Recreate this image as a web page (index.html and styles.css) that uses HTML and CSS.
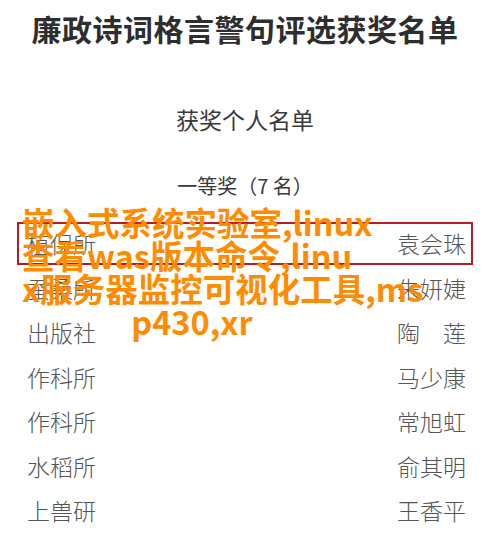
FILE: index.html
```html
<!DOCTYPE html>
<html lang="zh-CN">
<head>
    <meta charset="UTF-8">
    <meta name="viewport" content="width=device-width, initial-scale=1.0">
    <title>廉政诗词格言警句评选获奖名单</title>
    <link rel="stylesheet" href="styles.css">
</head>
<body>
    <div class="page">
        <h1 class="doc-title">廉政诗词格言警句评选获奖名单</h1>
        <h2 class="doc-subtitle">获奖个人名单</h2>
        <h3 class="prize-level">一等奖（7&nbsp;名）</h3>

        <ul class="winner-list">
            <li class="winner-row highlighted"><span>植保所</span><span>袁会珠</span></li>
            <li class="winner-row"><span>蚕桑所</span><span>朱妍婕</span></li>
            <li class="winner-row"><span>出版社</span><span>陶　莲</span></li>
            <li class="winner-row"><span>作科所</span><span>马少康</span></li>
            <li class="winner-row"><span>作科所</span><span>常旭虹</span></li>
            <li class="winner-row"><span>水稻所</span><span>俞其明</span></li>
            <li class="winner-row"><span>上兽研</span><span>王香平</span></li>
        </ul>

        <div class="overlay-title">
            <span>嵌入式系统实验室,linux</span>
            <span>查看was版本命令,linu</span>
            <span>x服务器监控可视化工具,ms</span>
            <span class="last-line">p430,xr</span>
        </div>
    </div>
</body>
</html>
```

FILE: styles.css
```css
:root {
    --ink: #3a3a3a;
    --ink-light: #555;
    --mark-red: #b81c24;
    --overlay-orange: #ff8c00;
}

body {
    margin: 0;
    padding: 0;
    background: #fff;
    font-family: "Noto Sans CJK SC", "Liberation Sans", sans-serif;
    color: var(--ink);
}

.page {
    position: relative;
    width: 490px;
    height: 537px;
    overflow: hidden;
}

.doc-title {
    margin: 0;
    height: 56px;
    line-height: 56px;
    font-size: 30px;
    font-weight: 700;
    text-align: center;
    letter-spacing: 0.5px;
    color: #2e2e2e;
}

.doc-subtitle {
    margin: 45px 0 0 0;
    height: 36px;
    line-height: 36px;
    font-size: 23px;
    font-weight: 400;
    text-align: center;
    color: var(--ink);
}

.prize-level {
    margin: 31px 0 0 0;
    height: 36px;
    line-height: 36px;
    font-size: 20px;
    font-weight: 400;
    text-align: center;
    color: var(--ink);
}

.winner-list {
    list-style: none;
    margin: 17px 0 0 0;
    padding: 0 16px;
}

.winner-row {
    display: flex;
    justify-content: space-between;
    align-items: center;
    height: 44.5px;
    padding: 0 8px 0 11px;
    font-size: 23px;
    font-weight: 300;
    color: var(--ink-light);
}

.winner-row.highlighted {
    outline: 2px solid var(--mark-red);
    outline-offset: -3px;
}

.overlay-title {
    position: absolute;
    left: 22px;
    top: 205px;
    width: 340px;
    font-size: 32.5px;
    font-weight: 700;
    line-height: 33px;
    color: var(--overlay-orange);
}

.overlay-title span {
    display: block;
    white-space: nowrap;
}

.overlay-title .last-line {
    text-align: center;
}
```
